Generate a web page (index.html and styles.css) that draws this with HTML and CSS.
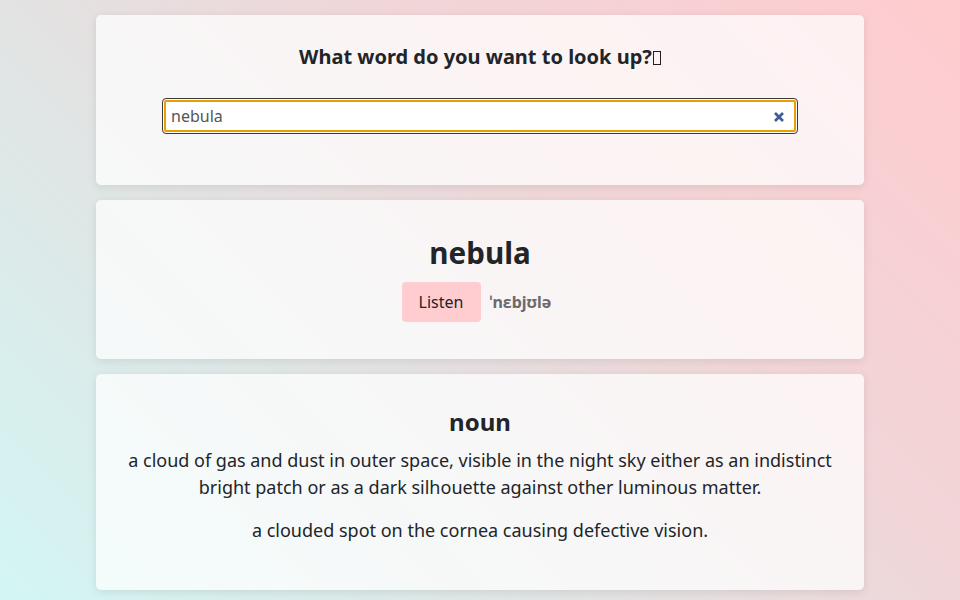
FILE: index.html
```html
<!DOCTYPE html>
<html lang="en">
<head>
<meta charset="utf-8">
<title>Dictionary</title>
<link rel="stylesheet" href="styles.css">
</head>
<body>
<main class="wrap">
  <section class="card search-card">
    <h2 class="prompt">What word do you want to look up?<span class="tofu" aria-hidden="true"></span></h2>
    <div class="search-box">
      <span class="search-text">nebula</span>
      <svg class="clear" width="12" height="12" viewBox="0 0 12 12" aria-hidden="true"><path d="M2 2 L10 10 M10 2 L2 10" stroke="#3b5b9c" stroke-width="2.6" stroke-linecap="butt"/></svg>
    </div>
  </section>
  <section class="card word-card">
    <h1 class="word">nebula</h1>
    <div class="phon-row">
      <button class="listen">Listen</button>
      <span class="phonetic">ˈnɛbjʊlə</span>
    </div>
  </section>
  <section class="card meaning-card">
    <h3 class="pos">noun</h3>
    <p class="def">a cloud of gas and dust in outer space, visible in the night sky either as an indistinct bright patch or as a dark silhouette against other luminous matter.</p>
    <p class="def">a clouded spot on the cornea causing defective vision.</p>
  </section>
</main>
</body>
</html>
```
FILE: styles.css
```css
html, body {
  margin: 0;
  padding: 0;
}
body {
  min-height: 600px;
  font-family: "Noto Sans", sans-serif;
  color: #212529;
  background: linear-gradient(45deg, #d2f6f4 0%, #e2e3e3 38%, #f0d6d8 62%, #ffcbcf 100%);
  background-attachment: fixed;
}
.wrap {
  width: 768px;
  margin: 0 auto;
  padding-top: 15px;
  display: flex;
  flex-direction: column;
  gap: 15px;
}
.card {
  background: rgba(255, 255, 255, 0.72);
  border-radius: 5px;
  box-shadow: 0 2px 10px rgba(0, 0, 0, 0.09);
  text-align: center;
}
.search-card {
  padding: 28px 66px 51px;
}
.prompt {
  margin: 0 0 27px;
  font-size: 20px;
  line-height: 28px;
  font-weight: 700;
}
.tofu {
  display: inline-block;
  box-sizing: border-box;
  width: 8px;
  height: 14px;
  border: 1.5px solid #222;
  margin-left: 1px;
  vertical-align: -1px;
}
.search-box {
  height: 36px;
  box-sizing: border-box;
  border: 1px solid #3a3a3a;
  border-radius: 4px;
  background: #fff;
  box-shadow: inset 0 0 0 1px #fff, inset 0 0 0 3px #e89f00;
  display: flex;
  align-items: center;
  justify-content: space-between;
  padding: 0 12px 0 8px;
  text-align: left;
}
.search-text {
  font-size: 16px;
  color: #555;
}
.clear {
  display: block;
  margin-top: 2px;
}
.word-card {
  padding: 33px 24px 37px;
}
.word {
  margin: 0 0 9px;
  font-size: 29.6px;
  line-height: 40px;
  font-weight: 700;
}
.phon-row {
  display: flex;
  justify-content: center;
  align-items: center;
  gap: 9px;
}
.listen {
  font-family: "Noto Sans", sans-serif;
  font-size: 16px;
  color: #212529;
  background: #ffcccf;
  border: none;
  border-radius: 4px;
  height: 40px;
  width: 79px;
  padding: 0;
}
.phonetic {
  font-size: 16px;
  font-weight: 700;
  color: #6a6a6a;
  min-width: 69px;
  text-align: left;
}
.meaning-card {
  padding: 32px 24px 46px;
}
.pos {
  margin: 0 0 9px;
  font-size: 24px;
  line-height: 32px;
  font-weight: 700;
}
.def {
  margin: 0 0 16px;
  font-size: 18px;
  line-height: 27px;
}
.def:last-child {
  margin-bottom: 0;
}
```
